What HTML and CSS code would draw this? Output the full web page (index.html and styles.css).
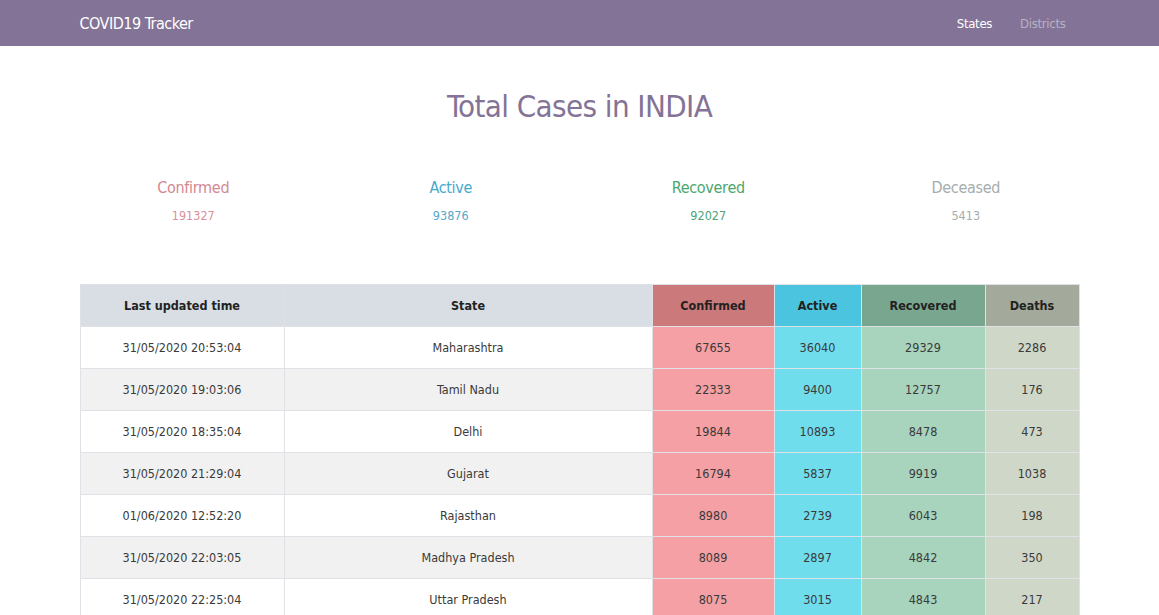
FILE: index.html
```html
<!DOCTYPE html>
<html>
<head>
<meta charset="utf-8">
<link rel="stylesheet" href="styles.css">
</head>
<body>
<nav class="navbar">
  <div class="nav-inner">
    <a class="brand">COVID19 Tracker</a>
    <div class="nav-links">
      <a class="nav-link active">States</a>
      <a class="nav-link">Districts</a>
    </div>
  </div>
</nav>
<main class="container">
  <h1 class="title">Total Cases in INDIA</h1>
  <div class="stats">
    <div class="stat confirmed"><div class="label">Confirmed</div><div class="num">191327</div></div>
    <div class="stat active"><div class="label">Active</div><div class="num">93876</div></div>
    <div class="stat recovered"><div class="label">Recovered</div><div class="num">92027</div></div>
    <div class="stat deceased"><div class="label">Deceased</div><div class="num">5413</div></div>
  </div>
  <table class="table">
    <thead>
      <tr>
        <th class="c-time">Last updated time</th>
        <th class="c-state">State</th>
        <th class="h-conf">Confirmed</th>
        <th class="h-act">Active</th>
        <th class="h-rec">Recovered</th>
        <th class="h-dea">Deaths</th>
      </tr>
    </thead>
    <tbody>
      <tr><td>31/05/2020 20:53:04</td><td>Maharashtra</td><td class="b-conf">67655</td><td class="b-act">36040</td><td class="b-rec">29329</td><td class="b-dea">2286</td></tr>
      <tr><td>31/05/2020 19:03:06</td><td>Tamil Nadu</td><td class="b-conf">22333</td><td class="b-act">9400</td><td class="b-rec">12757</td><td class="b-dea">176</td></tr>
      <tr><td>31/05/2020 18:35:04</td><td>Delhi</td><td class="b-conf">19844</td><td class="b-act">10893</td><td class="b-rec">8478</td><td class="b-dea">473</td></tr>
      <tr><td>31/05/2020 21:29:04</td><td>Gujarat</td><td class="b-conf">16794</td><td class="b-act">5837</td><td class="b-rec">9919</td><td class="b-dea">1038</td></tr>
      <tr><td>01/06/2020 12:52:20</td><td>Rajasthan</td><td class="b-conf">8980</td><td class="b-act">2739</td><td class="b-rec">6043</td><td class="b-dea">198</td></tr>
      <tr><td>31/05/2020 22:03:05</td><td>Madhya Pradesh</td><td class="b-conf">8089</td><td class="b-act">2897</td><td class="b-rec">4842</td><td class="b-dea">350</td></tr>
      <tr><td>31/05/2020 22:25:04</td><td>Uttar Pradesh</td><td class="b-conf">8075</td><td class="b-act">3015</td><td class="b-rec">4843</td><td class="b-dea">217</td></tr>
    </tbody>
  </table>
</main>
</body>
</html>
```

FILE: styles.css
```css
* { box-sizing: border-box; }
html, body { margin: 0; padding: 0; }
body {
  font-family: "DejaVu Sans Condensed", "DejaVu Sans", sans-serif;
  font-stretch: condensed;
  color: #212529;
  background: #fff;
  font-size: 14px;
}
.navbar {
  background: #837396;
  height: 46px;
}
.nav-inner {
  width: 1000px;
  margin: 0 auto;
  height: 46px;
  display: flex;
  align-items: center;
  justify-content: space-between;
}
.brand {
  color: #fff;
  font-size: 16px;
  letter-spacing: -0.5px;
}
.nav-links {
  display: flex;
  gap: 28px;
  padding-right: 14px;
}
.nav-link {
  color: rgba(255,255,255,0.45);
  font-size: 13px;
  letter-spacing: -0.3px;
}
.nav-link.active { color: #fff; }
.container {
  width: 1000px;
  margin: 0 auto;
}
.title {
  margin: 40px 0 0;
  text-align: center;
  font-weight: 300;
  font-size: 31px;
  line-height: 40px;
  color: #837396;
  letter-spacing: -0.6px;
}
.stats {
  display: grid;
  grid-template-columns: repeat(4, 1fr);
  margin: 51px -15px 0;
  text-align: center;
}
.stat .label { font-size: 16px; line-height: 22px; font-weight: 300; letter-spacing: -0.3px; }
.stat .num { font-size: 12.5px; line-height: 18px; margin-top: 8px; }
.confirmed .label { color: #d38892; }
.confirmed .num { color: #d9909c; }
.active .label { color: #45aacc; }
.active .num { color: #55a8c8; }
.recovered .label { color: #4aa86e; }
.recovered .num { color: #4fa474; }
.deceased .label { color: #a5adad; }
.deceased .num { color: #a5adb0; }
.table {
  width: 999px;
  margin-top: 59px;
  border-collapse: collapse;
  table-layout: fixed;
}
.table th, .table td {
  border: 1px solid #dee2e6;
  height: 42px;
  padding: 0 8px;
  text-align: center;
  vertical-align: middle;
  font-size: 12.5px;
  color: #3a3a3a;
}
.table th {
  font-weight: bold;
  color: #222;
  background: #d8dee4;
}
.table th:nth-child(1) { width: 204px; }
.table th:nth-child(2) { width: 368px; }
.table th:nth-child(3) { width: 122px; }
.table th:nth-child(4) { width: 87px; }
.table th:nth-child(5) { width: 124px; }
.table th:nth-child(6) { width: 94px; }
.table tbody tr:nth-child(even) { background: #f1f1f1; }
.table th.h-conf { background: #cc797b; }
.table th.h-act { background: #4ac4df; }
.table th.h-rec { background: #79a68e; }
.table th.h-dea { background: #a3aa9b; }
.table td.b-conf { background: #f4a0a4; }
.table td.b-act { background: #70dded; }
.table td.b-rec { background: #a8d3bd; }
.table td.b-dea { background: #cfd7c9; }
```
